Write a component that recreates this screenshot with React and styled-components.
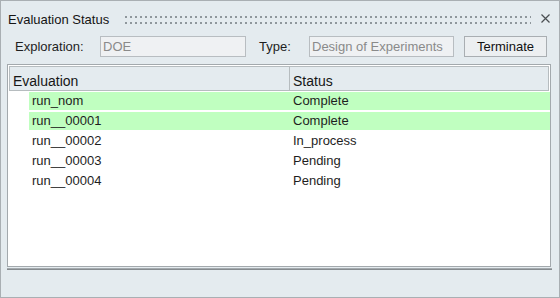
import React from 'react';
import styled, { createGlobalStyle } from 'styled-components';

const Global = createGlobalStyle`
  html, body { margin: 0; padding: 0; background: #ffffff; }
  body { font-family: "Liberation Sans", Arial, sans-serif; }
  * { box-sizing: border-box; }
`;

const Panel = styled.div`
  width: 560px;
  height: 298px;
  border: 1px solid #a9afb3;
  background: #e4ebef;
  display: flex;
  flex-direction: column;
  color: #1b1b1b;
  font-size: 13px;
`;

const TitleBar = styled.div`
  display: flex;
  align-items: flex-start;
  height: 35px;
  padding: 11px 9px 0 7px;
`;

const Title = styled.div`
  font-size: 13px;
  line-height: 15px;
  white-space: nowrap;
  color: #141414;
`;

const Grip = styled.div`
  flex: 1;
  height: 8px;
  margin: 4px 0 0 13px;
  background-image:
    linear-gradient(90deg, #e4ebef 3px, transparent 3px),
    linear-gradient(#8f979c 2px, transparent 2px);
  background-size: 5px 6px;
`;

const Close = styled.button`
  width: 9px;
  height: 9px;
  margin: 2px 0 0 10px;
  padding: 0;
  border: 0;
  background: transparent;
  display: flex;
  cursor: pointer;
`;

const Toolbar = styled.div`
  display: flex;
  align-items: center;
  height: 21px;
  padding-left: 14px;
`;

const Label = styled.div`
  width: ${p => p.$w}px;
  margin-left: ${p => p.$ml || 0}px;
  flex: none;
  line-height: 15px;
  color: #1e1e1e;
  white-space: nowrap;
`;

const Field = styled.div`
  width: ${p => p.$w}px;
  height: 21px;
  flex: none;
  border: 1px solid #b8bdc1;
  background: #eff1f3;
  color: #8a8a8a;
  padding-left: 2px;
  display: flex;
  align-items: center;
  white-space: nowrap;
`;

const Button = styled.button`
  width: 83px;
  height: 21px;
  flex: none;
  margin-left: 10px;
  padding: 0;
  border: 1px solid #a9aeb2;
  background: #eceff1;
  font-family: "Liberation Sans", Arial, sans-serif;
  font-size: 13px;
  color: #111111;
`;

const List = styled.div`
  margin: 7px 8px 0 6px;
  height: 203px;
  border: 1px solid #a3a9ad;
  background: #ffffff;
  display: flex;
  flex-direction: column;
`;

const Header = styled.div`
  margin: 1px 1px 0 1px;
  height: 25px;
  border: 1px solid #b6bcbf;
  background: #e4ebef;
  display: grid;
  grid-template-columns: 280px 1fr;
`;

const HeaderCell = styled.div`
  font-size: 14px;
  line-height: 16px;
  padding: 6px 0 1px 3px;
  color: #161616;
  border-right: ${p => (p.$divider ? '1px solid #b6bcbf' : '0')};
`;

const Rows = styled.div`
  display: flex;
  flex-direction: column;
  gap: 2px;
  padding: 1px 0 0 21px;
`;

const Row = styled.div`
  display: grid;
  grid-template-columns: 261px 1fr;
  height: 18px;
  background: ${p => (p.$done ? '#c0ffc0' : 'transparent')};
`;

const Cell = styled.div`
  padding-left: 3px;
  line-height: 18px;
  color: #1e1e1e;
  white-space: nowrap;
`;

const Separator = styled.div`
  margin: 1px 7px 0 6px;
  height: 2px;
  border-top: 1px solid #a4aaae;
  border-bottom: 1px solid #868c90;
`;

const rows = [
  { name: 'run_nom', status: 'Complete', done: true },
  { name: 'run__00001', status: 'Complete', done: true },
  { name: 'run__00002', status: 'In_process', done: false },
  { name: 'run__00003', status: 'Pending', done: false },
  { name: 'run__00004', status: 'Pending', done: false },
];

export default function App() {
  return (
    <>
      <Global />
      <Panel>
        <TitleBar>
          <Title>Evaluation Status</Title>
          <Grip />
          <Close aria-label="Close">
            <svg width="9" height="9" viewBox="0 0 9 9">
              <path d="M0.5 0.5 L8.5 8.5 M8.5 0.5 L0.5 8.5" stroke="#4a4f52" strokeWidth="1.2" fill="none" />
            </svg>
          </Close>
        </TitleBar>
        <Toolbar>
          <Label $w={85}>Exploration:</Label>
          <Field $w={146}>DOE</Field>
          <Label $w={50} $ml={13}>Type:</Label>
          <Field $w={145}>Design of Experiments</Field>
          <Button>Terminate</Button>
        </Toolbar>
        <List>
          <Header>
            <HeaderCell $divider>Evaluation</HeaderCell>
            <HeaderCell>Status</HeaderCell>
          </Header>
          <Rows>
            {rows.map(r => (
              <Row key={r.name} $done={r.done}>
                <Cell>{r.name}</Cell>
                <Cell>{r.status}</Cell>
              </Row>
            ))}
          </Rows>
        </List>
        <Separator />
      </Panel>
    </>
  );
}
